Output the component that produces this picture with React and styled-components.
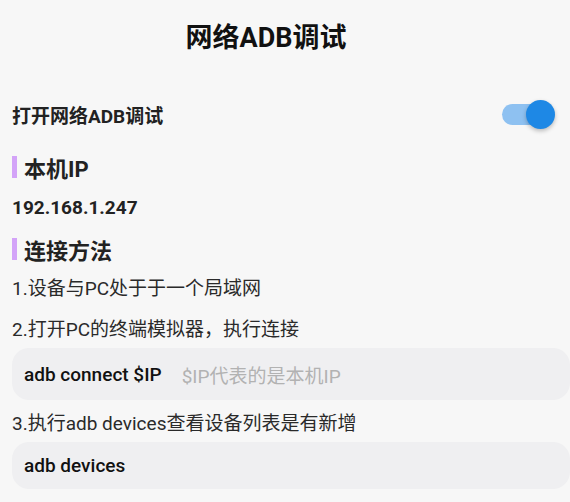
import React from "react";
import styled, { createGlobalStyle } from "styled-components";

const GlobalStyle = createGlobalStyle`
  html, body {
    margin: 0;
    padding: 0;
    background: #f7f7f7;
    overflow: hidden;
  }
  body {
    font-family: Roboto, "Noto Sans CJK SC", sans-serif;
    color: #1c1c1c;
  }
`;

const Page = styled.div`
  width: 570px;
  height: 502px;
  box-sizing: border-box;
  padding: 0 0 0 12px;
  overflow: hidden;
`;

const Title = styled.h1`
  margin: 0;
  height: 76px;
  line-height: 76px;
  text-align: center;
  font-size: 27px;
  font-weight: 700;
  color: #111;
  padding-right: 50px;
`;

const SwitchRow = styled.div`
  display: flex;
  align-items: center;
  justify-content: space-between;
  height: 76px;
  padding-right: 15px;
  font-size: 19px;
  font-weight: 700;
  color: #222;
`;

const Track = styled.div`
  position: relative;
  width: 53px;
  height: 29px;
  display: flex;
  align-items: center;
`;

const Rail = styled.div`
  width: 40px;
  height: 21px;
  border-radius: 11px;
  background: ${(p) => (p.$on ? "#8ec1f1" : "#c8c8c8")};
`;

const Thumb = styled.div`
  position: absolute;
  top: 0;
  right: 0;
  width: 29px;
  height: 29px;
  border-radius: 50%;
  background: #1e88e5;
  box-shadow: 0 2px 4px rgba(0, 0, 0, 0.25);
`;

const Heading = styled.h2`
  display: flex;
  align-items: center;
  gap: 7px;
  margin: 0;
  height: 30px;
  font-size: 22px;
  font-weight: 700;
  color: #222;
  &::before {
    content: "";
    width: 5px;
    height: 22px;
    background: #d3a3f8;
  }
`;

const IpValue = styled.div`
  height: 52px;
  line-height: 52px;
  font-size: 19px;
  font-weight: 700;
  color: #222;
`;

const Step = styled.p`
  margin: ${(p) => p.$top}px 0 0;
  line-height: 26px;
  font-size: 19px;
  color: #2a2a2a;
`;

const CodeBox = styled.div`
  display: flex;
  align-items: center;
  gap: 20px;
  box-sizing: border-box;
  height: ${(p) => p.$h}px;
  margin-top: 5px;
  padding: 0 12px;
  border-radius: 17px;
  background: #efeff1;
  font-size: 19px;
`;

const Command = styled.span`
  font-weight: 500;
  color: #111;
`;

const Hint = styled.span`
  color: #b2b2b2;
`;

export default function App() {
  return (
    <Page>
      <GlobalStyle />
      <Title>网络ADB调试</Title>
      <SwitchRow>
        <span>打开网络ADB调试</span>
        <Track>
          <Rail $on />
          <Thumb />
        </Track>
      </SwitchRow>
      <Heading>本机IP</Heading>
      <IpValue>192.168.1.247</IpValue>
      <Heading>连接方法</Heading>
      <Step $top={12}>1.设备与PC处于于一个局域网</Step>
      <Step $top={15}>2.打开PC的终端模拟器，执行连接</Step>
      <CodeBox $h={52}>
        <Command>adb connect $IP</Command>
        <Hint>$IP代表的是本机IP</Hint>
      </CodeBox>
      <Step $top={11}>3.执行adb devices查看设备列表是有新增</Step>
      <CodeBox $h={47}>
        <Command>adb devices</Command>
      </CodeBox>
    </Page>
  );
}
